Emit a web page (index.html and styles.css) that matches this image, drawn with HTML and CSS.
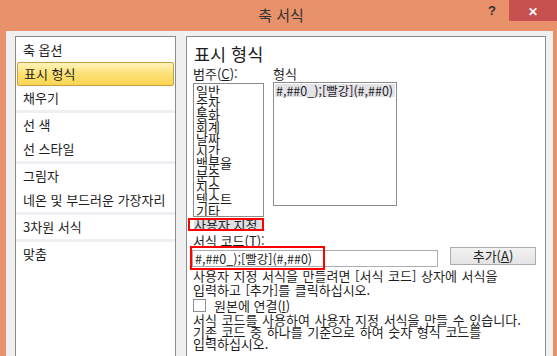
FILE: index.html
```html
<!DOCTYPE html>
<html lang="ko">
<head>
	<meta charset="UTF-8">
	<meta name="viewport" content="width=device-width, initial-scale=1.0">
	<link rel="stylesheet" href="styles.css">
	<title>축 서식</title>
</head>
<body>
	<div class="window">
		<div class="titlebar">
			<div class="title">축 서식</div>
			<div class="help">?</div>
			<div class="close">✕</div>
		</div>
		<div class="content">
			<div class="nav">
				<div class="nav-item">축 옵션</div>
				<div class="nav-item active">표시 형식</div>
				<div class="nav-item">채우기</div>
				<div class="nav-sep"></div>
				<div class="nav-item">선 색</div>
				<div class="nav-item">선 스타일</div>
				<div class="nav-sep"></div>
				<div class="nav-item">그림자</div>
				<div class="nav-item">네온 및 부드러운 가장자리</div>
				<div class="nav-sep"></div>
				<div class="nav-item">3차원 서식</div>
				<div class="nav-sep"></div>
				<div class="nav-item">맞춤</div>
			</div>
			<div class="pane">
				<h2>표시 형식</h2>
				<div class="lists">
					<div class="category">
						<div class="label">범주(<u>C</u>):</div>
						<div class="listbox cat-box">
							<div>일반</div>
							<div>숫자</div>
							<div>통화</div>
							<div>회계</div>
							<div>날짜</div>
							<div>시간</div>
							<div>백분율</div>
							<div>분수</div>
							<div>지수</div>
							<div>텍스트</div>
							<div>기타</div>
						</div>
						<div class="custom">사용자 지정</div>
					</div>
					<div class="format">
						<div class="label">형식</div>
						<div class="listbox fmt-box">
							<div class="selected">#,##0_);[빨강](#,##0)</div>
						</div>
					</div>
				</div>
				<div class="label code-label">서식 코드(<u>T</u>):</div>
				<div class="code-row">
					<div class="code-input">#,##0_);[빨강](#,##0)</div>
					<div class="mark"></div>
					<button class="add-btn">추가(<u>A</u>)</button>
				</div>
				<p class="hint">사용자 지정 서식을 만들려면 [서식 코드] 상자에 서식을<br>입력하고 [추가]를 클릭하십시오.</p>
				<label class="check"><span class="box"></span>원본에 연결(<u>I</u>)</label>
				<p class="note">서식 코드를 사용하여 사용자 지정 서식을 만들 수 있습니다.<br>기존 코드 중 하나를 기준으로 하여 숫자 형식 코드를<br>입력하십시오.</p>
			</div>
		</div>
	</div>
</body>
</html>
```
FILE: styles.css
```css
body {
	margin: 0;
	padding: 0;
	font-family: "Noto Sans CJK KR", "Noto Sans", sans-serif;
	color: #1e1e1e;
}

h2, p {
	margin: 0;
	padding: 0;
	font-weight: normal;
}

.window {
	width: 557px;
	height: 356px;
	overflow: hidden;
	background: #e9916a;
	display: flex;
	flex-direction: column;
}

.titlebar {
	height: 31px;
	display: flex;
	align-items: flex-start;
	flex-shrink: 0;
}
.titlebar .title {
	flex: 1;
	padding-left: 74px;
	text-align: center;
	font-size: 15px;
	line-height: 29px;
	color: #333;
}
.titlebar .help {
	width: 14px;
	margin-right: 7px;
	font-family: "Liberation Sans", sans-serif;
	font-weight: bold;
	font-size: 13px;
	line-height: 22px;
	color: #333;
}
.titlebar .close {
	width: 48px;
	height: 21px;
	background: #c75050;
	color: #fff;
	font-size: 12px;
	font-weight: bold;
	text-align: center;
	line-height: 21px;
}

.content {
	flex: 1;
	margin: 0 4px 0 6px;
	background: #f0f0f0;
	display: flex;
	padding: 5px 7px 0 9px;
	gap: 10px;
}

.nav {
	width: 159px;
	background: #fff;
	border: 1px solid #8c8c8c;
	border-bottom: 0;
	padding-top: 1px;
	box-sizing: content-box;
}
.nav-item {
	height: 24px;
	line-height: 24px;
	padding-left: 7px;
	font-size: 13px;
	box-sizing: border-box;
}
.nav-item.active {
	margin: 0 1px;
	padding-left: 6px;
	border: 1px solid #c9a040;
	border-radius: 2px;
	line-height: 22px;
	background: linear-gradient(#fff4bd, #fde27a 45%, #f9d550);
}
.nav-sep {
	height: 3px;
	background: #eef0f3;
}

.pane {
	flex: 1;
	background: #fff;
	border: 1px solid #8c8c8c;
	border-bottom: 0;
	padding: 6px 0 0 6px;
	font-size: 13px;
	line-height: 14px;
}

.pane h2 {
	font-size: 17.5px;
	line-height: 22px;
	padding-left: 1px;
	margin-bottom: 2px;
}

.label {
	font-size: 13px;
	line-height: 14px;
	height: 16px;
}

.lists {
	display: flex;
	gap: 9px;
}

.category {
	width: 71px;
}

.listbox {
	border: 1px solid #8c8c8c;
	box-sizing: border-box;
	font-size: 13px;
	line-height: 12px;
	overflow: hidden;
}
.cat-box {
	width: 71px;
	height: 134px;
	padding: 1px 2px;
}
.fmt-box {
	width: 124px;
	height: 124px;
	padding: 1px;
	margin-top: -1px;
}
.fmt-box .selected {
	background: #e3e3e8;
	line-height: 13px;
	padding-left: 1px;
	font-size: 12.5px;
}

.custom {
	width: 68px;
	height: 9px;
	margin: 1px 0 0 -5px;
	border: 2px solid #f00;
	box-sizing: content-box;
	padding-left: 4px;
	font-size: 13px;
	line-height: 10px;
	overflow: hidden;
	white-space: nowrap;
	background: linear-gradient(to right, #fff 0 4px, #dedee4 4px);
}

.code-label {
	margin-top: 3px;
}

.code-row {
	position: relative;
	display: flex;
	align-items: flex-start;
	height: 24px;
	margin: -4px 0 0 -1px;
}
.code-input {
	width: 246px;
	height: 17px;
	margin-top: 4px;
	border: 1px solid #abadb3;
	box-sizing: border-box;
	padding-left: 2px;
	font-size: 12.5px;
	line-height: 15px;
}
.mark {
	position: absolute;
	left: -2px;
	top: 0;
	width: 131px;
	height: 20px;
	border: 2px solid #f00;
}
.add-btn {
	margin: 1px 0 0 12px;
	width: 86px;
	height: 18px;
	padding: 0;
	border: 1px solid #acacac;
	background: linear-gradient(#f2f2f2, #e3e3e3);
	font-family: inherit;
	font-size: 13px;
	line-height: 16px;
	color: #1e1e1e;
}

.hint {
	line-height: 14px;
	margin-top: -1px;
	word-spacing: 1px;
}

.check {
	display: flex;
	align-items: center;
	height: 15px;
	margin-top: 1px;
}
.check .box {
	width: 11px;
	height: 11px;
	border: 1px solid #8f8f8f;
	background: #fff;
	margin-right: 8px;
}

.note {
	margin-top: 1px;
	line-height: 12px;
	word-spacing: 1px;
}
```
